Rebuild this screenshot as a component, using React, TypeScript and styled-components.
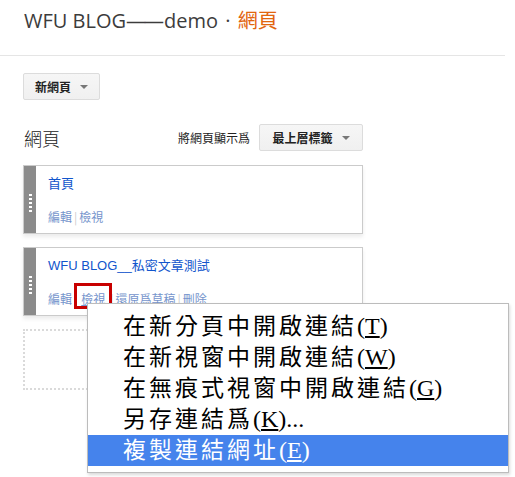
import React from 'react';
import styled, { createGlobalStyle } from 'styled-components';

const GlobalStyle = createGlobalStyle`
  body {
    margin: 0;
    background: #fff;
    font-family: "Liberation Sans", "Noto Sans CJK TC", sans-serif;
  }
`;

const pages = [
    { title: '首頁', links: ['編輯', '檢視'] },
    { title: 'WFU BLOG__私密文章測試', links: ['編輯', '檢視', '還原爲草稿', '刪除'], marked: true },
];

const menuItems = [
    { text: '在新分頁中開啟連結', key: 'T' },
    { text: '在新視窗中開啟連結', key: 'W' },
    { text: '在無痕式視窗中開啟連結', key: 'G' },
    { text: '另存連結爲', key: 'K', tail: '...' },
    { text: '複製連結網址', key: 'E', active: true },
];

const App: React.FC = () => {
    return (
        <Page>
            <GlobalStyle />
            <Header>
                WFU BLOG<Dashes>——</Dashes>demo <Dot>·</Dot> <Accent>網頁</Accent>
            </Header>
            <Content>
                <DropButton $width={77}>
                    新網頁 <Caret />
                </DropButton>
                <SectionRow>
                    <SectionTitle>網頁</SectionTitle>
                    <DisplayAs>
                        將網頁顯示爲
                        <DropButton $width={104}>
                            最上層標籤 <Caret />
                        </DropButton>
                    </DisplayAs>
                </SectionRow>
                <CardList>
                    {pages.map((p) => (
                        <Card key={p.title}>
                            <Handle>
                                <Dots>
                                    {[0, 1, 2, 3, 4].map((i) => (
                                        <span key={i} />
                                    ))}
                                </Dots>
                            </Handle>
                            <CardBody>
                                <CardTitle>{p.title}</CardTitle>
                                <Links>
                                    {p.links.map((l, i) => (
                                        <React.Fragment key={l}>
                                            {i > 0 && <Sep>|</Sep>}
                                            {p.marked && l === '檢視' ? (
                                                <Marked>
                                                    <ActionLink $hover>{l}</ActionLink>
                                                    <RedBox />
                                                </Marked>
                                            ) : (
                                                <ActionLink>{l}</ActionLink>
                                            )}
                                        </React.Fragment>
                                    ))}
                                </Links>
                            </CardBody>
                        </Card>
                    ))}
                    <DropZone />
                </CardList>
            </Content>
            <ContextMenu>
                {menuItems.map((m) => (
                    <MenuItem key={m.key} $active={m.active}>
                        {m.text}
                        <Latin>
                            (<u>{m.key}</u>){m.tail}
                        </Latin>
                    </MenuItem>
                ))}
            </ContextMenu>
        </Page>
    );
};

const Page = styled.div`
  position: relative;
  width: 515px;
  height: 477px;
  overflow: hidden;
`;

const Header = styled.div`
  width: 481px;
  height: 55px;
  padding-left: 24px;
  border-bottom: 1px solid #e5e5e5;
  font-family: "Open Sans", "Noto Sans CJK TC", sans-serif;
  font-size: 20px;
  line-height: 42px;
  color: #3c3c3c;
  white-space: nowrap;
`;

const Dashes = styled.span`
  letter-spacing: -2px;
  margin-right: 2px;
`;

const Dot = styled.span`
  margin: 0 2px;
`;

const Accent = styled.span`
  color: #e2650f;
`;

const Content = styled.div`
  width: 340px;
  padding: 17px 0 0 23px;
`;

const DropButton = styled.div<{ $width: number }>`
  box-sizing: border-box;
  display: inline-flex;
  align-items: center;
  justify-content: center;
  gap: 9px;
  width: ${(p) => p.$width}px;
  height: 27px;
  border: 1px solid #dcdcdc;
  border-radius: 2px;
  background: linear-gradient(#f6f6f6, #f0f0f0);
  font-family: "Noto Sans CJK TC", sans-serif;
  font-size: 12px;
  font-weight: 700;
  color: #222;
`;

const Caret = styled.span`
  width: 0;
  height: 0;
  border-left: 4px solid transparent;
  border-right: 4px solid transparent;
  border-top: 4px solid #777;
  margin-top: 1px;
`;

const SectionRow = styled.div`
  display: flex;
  justify-content: space-between;
  align-items: center;
  margin-top: 24px;
  height: 27px;
`;

const SectionTitle = styled.div`
  font-family: "Noto Sans CJK TC", sans-serif;
  font-size: 18px;
  font-weight: 300;
  color: #222;
  padding-left: 1px;
`;

const DisplayAs = styled.div`
  display: flex;
  align-items: center;
  gap: 9px;
  font-family: "Noto Sans CJK TC", sans-serif;
  font-size: 12px;
  color: #222;
`;

const CardList = styled.div`
  display: flex;
  flex-direction: column;
  gap: 13px;
  margin-top: 14px;
`;

const Card = styled.div`
  display: flex;
  height: 69px;
  box-sizing: border-box;
  border: 1px solid #cbcbcb;
  background: #fff;
  box-shadow: 0 3px 4px rgba(0, 0, 0, 0.08);
`;

const Handle = styled.div`
  width: 12px;
  background: #8b8b8b;
  display: flex;
  align-items: flex-end;
  justify-content: center;
  padding-bottom: 21px;
`;

const Dots = styled.div`
  display: flex;
  flex-direction: column;
  gap: 2px;
  span {
    width: 3px;
    height: 2px;
    background: #fff;
  }
`;

const CardBody = styled.div`
  padding: 9px 12px 0;
  display: flex;
  flex-direction: column;
  gap: 15px;
`;

const CardTitle = styled.div`
  font-size: 13px;
  line-height: 18px;
  color: #1155cc;
`;

const Links = styled.div`
  display: flex;
  align-items: center;
  font-family: "Noto Sans CJK TC", sans-serif;
  font-size: 12px;
  line-height: 18px;
`;

const ActionLink = styled.span<{ $hover?: boolean }>`
  color: #7594cc;
  text-decoration: ${(p) => (p.$hover ? 'underline' : 'none')};
`;

const Sep = styled.span`
  color: #ccc;
  margin: 0 2px;
`;

const Marked = styled.span`
  position: relative;
  margin: 0 3px 0 2px;
`;

const RedBox = styled.span`
  position: absolute;
  left: -7px;
  top: -7px;
  width: 32px;
  height: 20px;
  border: 3px solid #c80000;
`;

const DropZone = styled.div`
  height: 61px;
  border: 2px dotted #dadada;
  box-sizing: border-box;
`;

const ContextMenu = styled.div`
  position: absolute;
  left: 87px;
  top: 303px;
  width: 420px;
  padding: 7px 0 6px;
  border: 1px solid #bcbcbc;
  background: #fff;
  box-shadow: 1px 2px 3px rgba(0, 0, 0, 0.15);
`;

const MenuItem = styled.div<{ $active?: boolean }>`
  height: 31px;
  line-height: 27px;
  padding-left: 35px;
  font-family: "Noto Sans CJK TC", serif;
  font-size: 23px;
  letter-spacing: 3px;
  color: ${(p) => (p.$active ? '#fff' : '#000')};
  background: ${(p) => (p.$active ? '#4583ec' : 'transparent')};
  white-space: nowrap;
`;

const Latin = styled.span`
  font-family: "Liberation Serif", serif;
  font-size: 24px;
  letter-spacing: 0;
`;

export default App;
